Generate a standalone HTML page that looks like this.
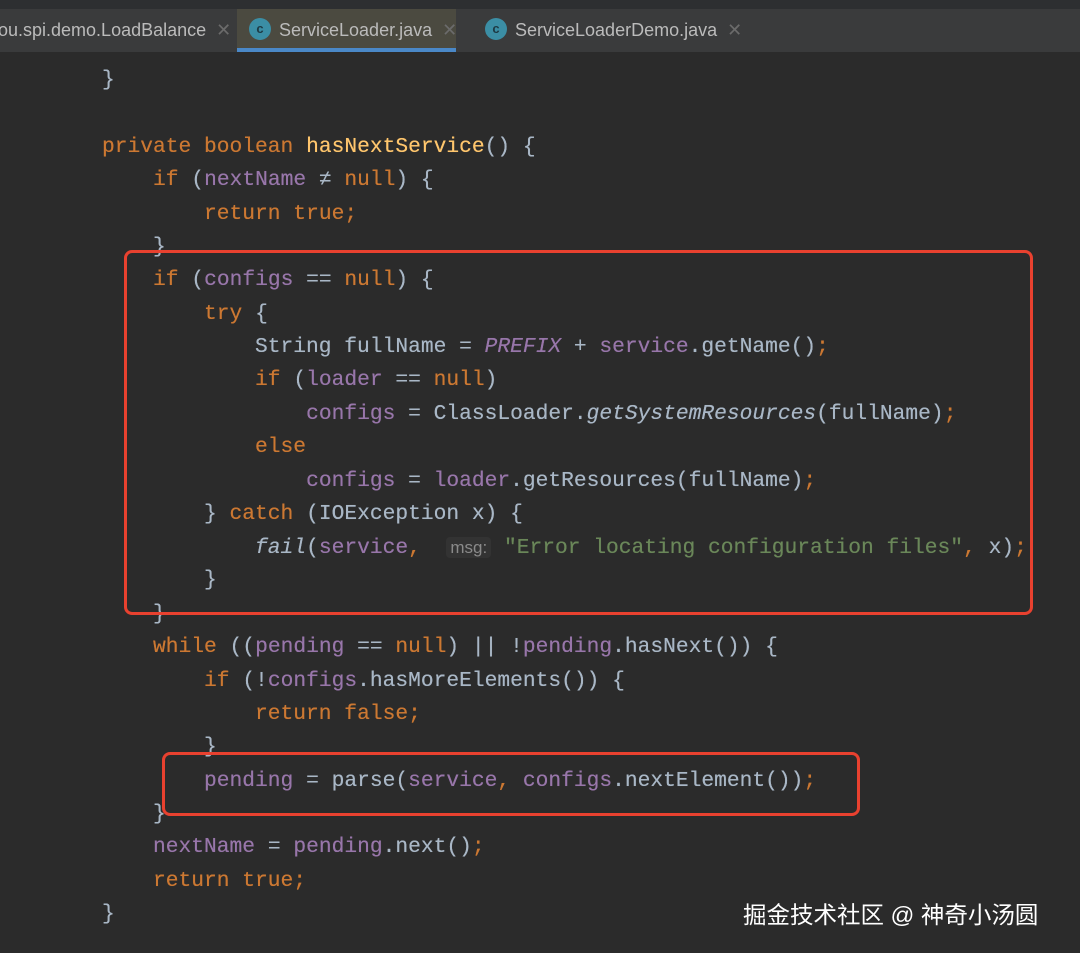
<!DOCTYPE html>
<html><head><meta charset="utf-8"><style>
body{margin:0;width:1080px;height:953px;background:#2b2b2b;overflow:hidden;position:relative;font-family:"Liberation Mono",monospace}
.top{position:absolute;left:0;top:0;width:1080px;height:9px;background:#2d2f31}
.tabs{position:absolute;left:0;top:9px;width:1080px;height:43px;background:#3a3b3c;font-family:"Liberation Sans",sans-serif;font-size:18px;color:#bbbbbb}
.tab{position:absolute;top:0;height:43px;line-height:42px;white-space:nowrap}
.act{background:#4b4a40;}
.ul{position:absolute;left:237px;top:48px;width:219px;height:4px;background:#4a88c7}
.x{color:#6b6b6b;margin-left:10px}
.ic{display:inline-block;width:22px;height:22px;border-radius:50%;background:#3b8ea5;vertical-align:middle;margin-right:8px;position:relative;top:-2px;color:#1d3a44;font-size:13px;line-height:22px;text-align:center;font-weight:bold}
.l{position:absolute;left:0;height:33.4px;line-height:33.4px;font-size:21.25px;white-space:pre;color:#a9b7c6;text-shadow:0 0 0.4px currentColor}
.k{color:#cc7832}.p{color:#9876aa}.s{color:#6a8759}.i{font-style:italic}
.hint{font-family:"Liberation Sans",sans-serif;font-size:17px;color:#8a8a8a;background:#333333;border-radius:4px;padding:1px 4px;text-shadow:none}
.box{position:absolute;border:3px solid #e8412f;border-radius:8px}
.wm{position:absolute;left:743px;top:896px;font-family:"Liberation Sans","Noto Sans CJK SC",sans-serif;font-size:23.5px;color:#fff;white-space:nowrap}
</style></head><body>
<div class="top"></div>
<div class="tabs">
<div class="tab" style="left:-2px">ou.spi.demo.LoadBalance<span class="x">✕</span></div>
<div class="tab act" style="left:237px;width:219px;padding-left:12px;box-sizing:border-box"><span class="ic">c</span>ServiceLoader.java<span class="x">✕</span></div>
<div class="tab" style="left:485px"><span class="ic">c</span>ServiceLoaderDemo.java<span class="x">✕</span></div>
</div>
<div class="ul"></div>
<div class="l" style="top:64px">        }</div>
<div class="l" style="top:131px">        <span class="k">private boolean </span><span style="color:#ffc66d">hasNextService</span>() {</div>
<div class="l" style="top:164px">            <span class="k">if </span>(<span class="p">nextName</span> ≠ <span class="k">null</span>) {</div>
<div class="l" style="top:198px">                <span class="k">return true;</span></div>
<div class="l" style="top:231px">            }</div>
<div class="l" style="top:264px">            <span class="k">if </span>(<span class="p">configs</span> == <span class="k">null</span>) {</div>
<div class="l" style="top:298px">                <span class="k">try </span>{</div>
<div class="l" style="top:331px">                    String fullName = <span class="p i">PREFIX</span> + <span class="p">service</span>.getName()<span class="k">;</span></div>
<div class="l" style="top:364px">                    <span class="k">if </span>(<span class="p">loader</span> == <span class="k">null</span>)</div>
<div class="l" style="top:398px">                        <span class="p">configs</span> = ClassLoader.<span class="i">getSystemResources</span>(fullName)<span class="k">;</span></div>
<div class="l" style="top:431px">                    <span class="k">else</span></div>
<div class="l" style="top:465px">                        <span class="p">configs</span> = <span class="p">loader</span>.getResources(fullName)<span class="k">;</span></div>
<div class="l" style="top:498px">                } <span class="k">catch </span>(IOException x) {</div>
<div class="l" style="top:531px">                    <span class="i">fail</span>(<span class="p">service</span><span class="k">,</span>  <span class="hint">msg:</span> <span class="s">"Error locating configuration files"</span><span class="k">,</span> x)<span class="k">;</span></div>
<div class="l" style="top:564px">                }</div>
<div class="l" style="top:598px">            }</div>
<div class="l" style="top:631px">            <span class="k">while </span>((<span class="p">pending</span> == <span class="k">null</span>) || !<span class="p">pending</span>.hasNext()) {</div>
<div class="l" style="top:665px">                <span class="k">if </span>(!<span class="p">configs</span>.hasMoreElements()) {</div>
<div class="l" style="top:698px">                    <span class="k">return false;</span></div>
<div class="l" style="top:731px">                }</div>
<div class="l" style="top:765px">                <span class="p">pending</span> = parse(<span class="p">service</span><span class="k">, </span><span class="p">configs</span>.nextElement())<span class="k">;</span></div>
<div class="l" style="top:798px">            }</div>
<div class="l" style="top:831px">            <span class="p">nextName</span> = <span class="p">pending</span>.next()<span class="k">;</span></div>
<div class="l" style="top:865px">            <span class="k">return true;</span></div>
<div class="l" style="top:898px">        }</div>
<div class="box" style="left:124px;top:250px;width:903px;height:359px"></div>
<div class="box" style="left:162px;top:752px;width:692px;height:58px"></div>
<div class="wm">掘金技术社区 @ 神奇小汤圆</div>
</body></html>
